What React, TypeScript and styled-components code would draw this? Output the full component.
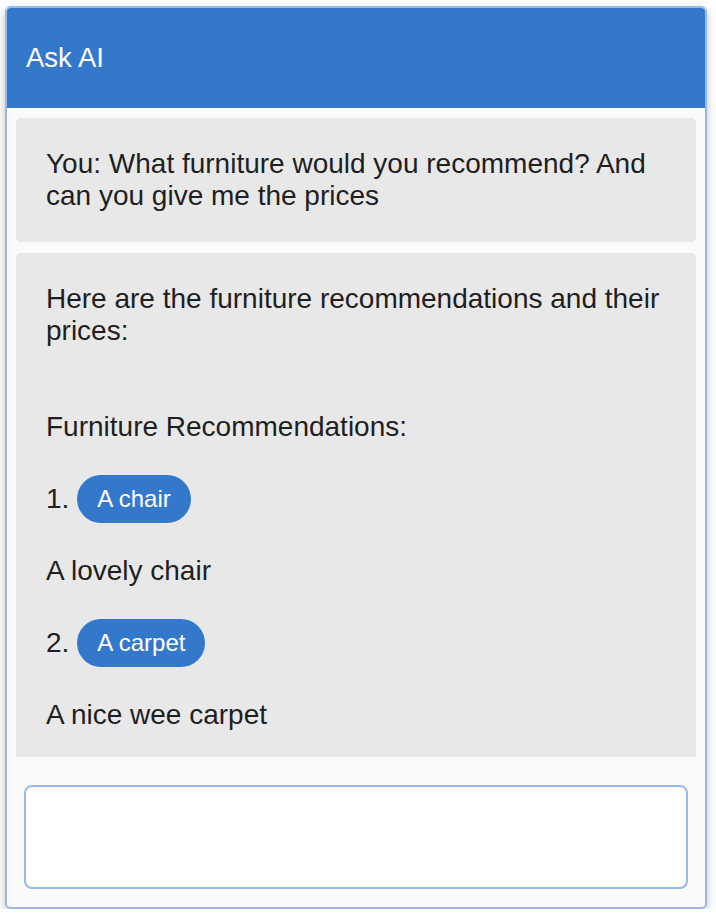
import React from "react";
import styled, { createGlobalStyle } from "styled-components";

const Global = createGlobalStyle`
  html, body { margin: 0; padding: 0; background: #ffffff; }
  body { font-family: "Liberation Sans", Arial, Helvetica, sans-serif; }
`;

const Page = styled.div`
  padding: 6px 0 0 5px;
`;

const Widget = styled.div`
  width: 702px;
  height: 903px;
  box-sizing: border-box;
  border: 2px solid #97b9e8;
  border-radius: 6px;
  background: #fafafa;
  box-shadow: 0 3px 10px rgba(0, 0, 0, 0.25);
  display: flex;
  flex-direction: column;
  overflow: hidden;
`;

const Header = styled.div`
  height: 100px;
  flex: none;
  background: #3478cc;
  color: #ffffff;
  display: flex;
  align-items: center;
  padding-left: 19px;
  font-size: 27.5px;
`;

const Messages = styled.div`
  flex: 1;
  min-height: 0;
  overflow: hidden;
  padding: 10px 9px 0 9px;
  display: flex;
  flex-direction: column;
  gap: 11px;
`;

const Card = styled.div`
  flex: none;
  background: #e8e8e8;
  border-radius: 5px;
  padding: 30px 30px;
  color: #1f1f1f;
  font-size: 28px;
  line-height: 32px;
`;

const Para = styled.p<{ $gap?: number }>`
  margin: 0 0 ${(p) => p.$gap ?? 32}px 0;
`;

const ItemRow = styled.div`
  display: flex;
  align-items: center;
  gap: 8px;
  margin-bottom: 32px;
`;

const Pill = styled.span`
  display: inline-flex;
  align-items: center;
  height: 48px;
  padding: 0 20px;
  border-radius: 24px;
  background: #3478cc;
  color: #ffffff;
  font-size: 24px;
`;

const InputArea = styled.div`
  flex: none;
  height: 150px;
  box-sizing: border-box;
  padding: 28px 17px 18px 17px;
  background: #fafafa;
`;

const Input = styled.textarea`
  display: block;
  width: 100%;
  height: 104px;
  box-sizing: border-box;
  border: 2px solid #97b9e8;
  border-radius: 8px;
  background: #ffffff;
  resize: none;
  outline: none;
  font-family: inherit;
  font-size: 24px;
  padding: 10px;
`;

export default function App() {
  return (
    <>
      <Global />
      <Page>
        <Widget>
          <Header>Ask AI</Header>
          <Messages>
            <Card>You: What furniture would you recommend? And can you give me the prices</Card>
            <Card>
              <Para $gap={64}>Here are the furniture recommendations and their prices:</Para>
              <Para>Furniture Recommendations:</Para>
              <ItemRow>
                <span>1.</span>
                <Pill>A chair</Pill>
              </ItemRow>
              <Para>A lovely chair</Para>
              <ItemRow>
                <span>2.</span>
                <Pill>A carpet</Pill>
              </ItemRow>
              <Para>A nice wee carpet</Para>
            </Card>
          </Messages>
          <InputArea>
            <Input aria-label="Ask a question" />
          </InputArea>
        </Widget>
      </Page>
    </>
  );
}
